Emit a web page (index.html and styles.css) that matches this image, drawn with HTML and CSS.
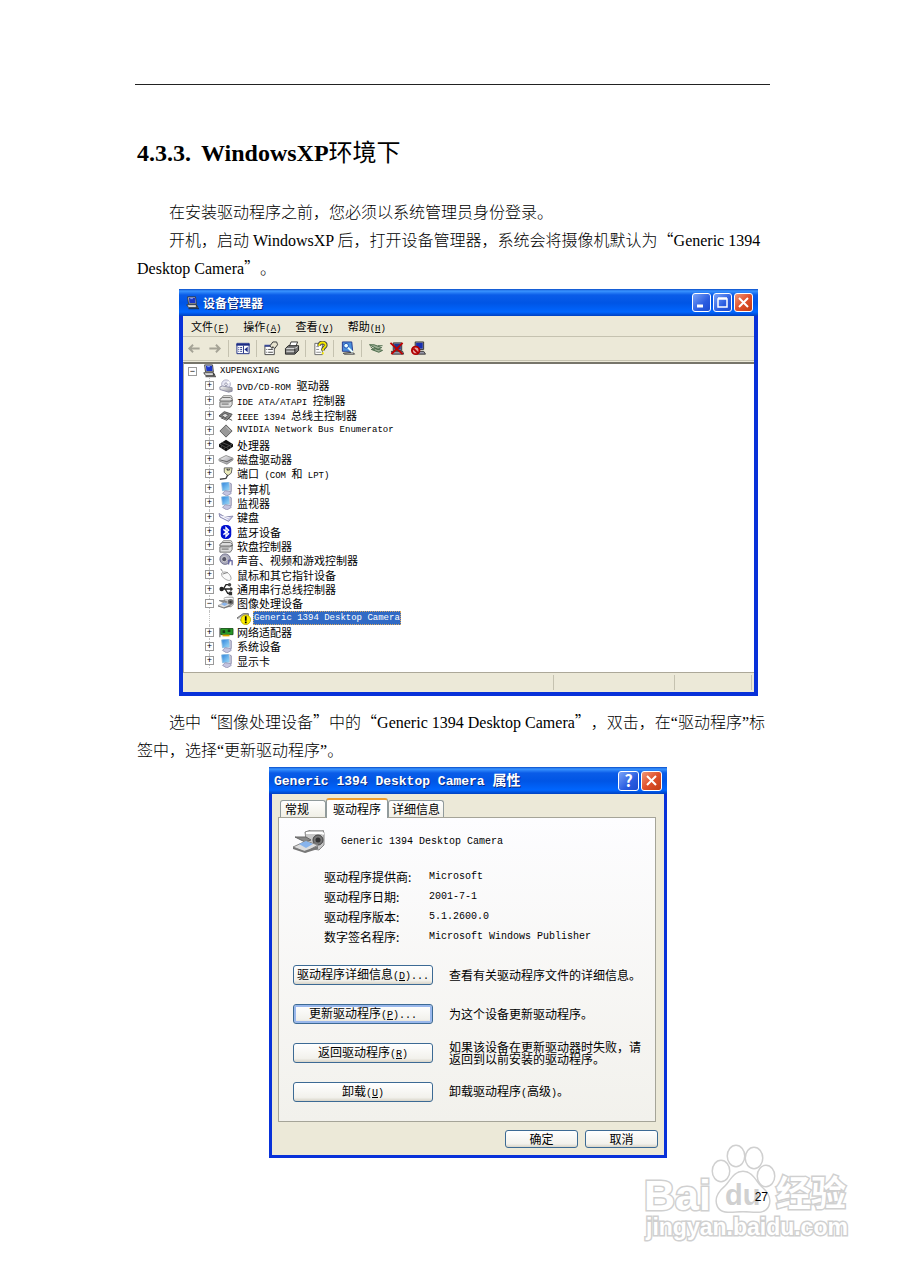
FILE: index.html
```html
<!DOCTYPE html>
<html lang="zh-CN">
<head>
	<meta charset="UTF-8">
	<title>4.3.3. WindowsXP环境下</title>
	<link rel="stylesheet" href="styles.css">
</head>
<body>
<svg class="defs" aria-hidden="true">
<defs>
<linearGradient id="screen" x1="0" y1="0" x2="1" y2="1"><stop offset="0" stop-color="#2a7fdc"/><stop offset="1" stop-color="#a8e4fa"/></linearGradient>
<linearGradient id="metal" x1="0" y1="0" x2="1" y2="1"><stop offset="0" stop-color="#fff"/><stop offset="1" stop-color="#8a8a92"/></linearGradient>
</defs>
<symbol id="i-pc" viewBox="0 0 16 16"><path d="M3 1h9l1 8H4z" fill="#d8d8d4" stroke="#333"/><path d="M4.500 2h7l.5 6H5z" fill="#1a35c8"/><path d="M6 3h3" stroke="#9ab8ff"/><path d="M2 10h11l2 3H4z" fill="#eee" stroke="#333"/><path d="M4 14.500h12M13 10v3" stroke="#222"/></symbol>
<symbol id="i-cd" viewBox="0 0 16 16"><circle cx="8" cy="6" r="5" fill="#e6e6f4" stroke="#aaaac0"/><path d="M8 6l4-3M8 6L5 10" stroke="#fff" stroke-width="2"/><circle cx="8" cy="6" r="1.500" fill="#fff" stroke="#9090a8"/><path d="M1 9l3-1 11 2v4l-4 1-10-3z" fill="url(#metal)" stroke="#8888a0"/></symbol>
<symbol id="i-drive" viewBox="0 0 16 16"><path d="M2 6l3-4h9l1 2v4" fill="#f4f4f0" stroke="#777"/><path d="M1 6l3-2h9l2 2v2H1zM1 9h11l3-2v5l-2 3H1z" fill="#ddd" stroke="#666"/><path d="M3 11.500h8" stroke="#555"/></symbol>
<symbol id="i-1394" viewBox="0 0 16 16"><path d="M0 8l6-5 9 3-5 6z" fill="#8a8a8a" stroke="#444"/><path d="M3 7l4-2 4 2-4 3z" fill="#ddd" stroke="#555"/><path d="M2 10l7 3 5-5M11 11l4 2" stroke="#444" fill="none"/></symbol>
<symbol id="i-diamond" viewBox="0 0 16 16"><path d="M8 1l7 7-7 7-7-7z" fill="#999" stroke="#555"/><path d="M8 3l5 5" stroke="#ccc"/></symbol>
<symbol id="i-cpu" viewBox="0 0 16 16"><path d="M0 7l8-5 8 5v3l-8 5-8-5z" fill="#111"/><path d="M1 7l7 4 7-4M3 5l10 4M3 11V9m3 4v-2m4 2v-2m3 0V9" stroke="#555" fill="none"/></symbol>
<symbol id="i-disk" viewBox="0 0 16 16"><path d="M0 8l8-4 8 3v2l-7 5-9-4z" fill="url(#metal)" stroke="#888"/><path d="M1 9l8 2 6-3" stroke="#555" fill="none"/></symbol>
<symbol id="i-port" viewBox="0 0 16 16"><path d="M6 1l9 0-1 6-4 3-4-4z" fill="#e8e8b8" stroke="#555"/><path d="M9 2l1 2m2-2l-1 2M10 9l-2 4-7 1" stroke="#444" stroke-width="1.500" fill="none"/></symbol>
<symbol id="i-computer" viewBox="0 0 16 16"><path d="M3 1l8-1 2 9-9 1z" fill="url(#screen)" stroke="#8abbe0"/><path d="M12 1l2 1v9l-2 1" stroke="#8888a8" fill="#ccccdc"/><path d="M4 13l3-3 6 1 1 2-5 3z" fill="#c4c4e0" stroke="#9898b8"/></symbol>
<symbol id="i-key" viewBox="0 0 16 16"><path d="M0 4l7 4 9-1-5 6-10-5z" fill="#c8c8e8" stroke="#8080a8"/><path d="M2 7l8 4M4 7l8 2" stroke="#fff"/></symbol>
<symbol id="i-bt" viewBox="0 0 16 16"><rect x="2" y="0" width="12" height="16" rx="5" fill="#0010d0"/><path d="M5 5l6 5-3 3V3l3 3-6 5" stroke="#fff" stroke-width="1.500" fill="none"/></symbol>
<symbol id="i-sound" viewBox="0 0 16 16"><circle cx="7" cy="7" r="6" fill="#aaaabd" stroke="#666680"/><circle cx="6" cy="7" r="3" fill="#555568" stroke="#ddd"/><path d="M11 8v5M11 8l4 1v5" stroke="#6666a0" stroke-width="1.500" fill="none"/></symbol>
<symbol id="i-mouse" viewBox="0 0 16 16"><path d="M3 6c3-3 8-1 10 3s0 6-3 5-8-4-7-8z" fill="#fafafa" stroke="#999"/><path d="M4 7l6-2M4 4L2 1" stroke="#777"/></symbol>
<symbol id="i-usb" viewBox="0 0 16 16"><path d="M2 8h12M5 8l3-5h3M7 8l3 5h2" stroke="#222" stroke-width="1.500" fill="none"/><circle cx="3" cy="8" r="2.500" fill="#222"/><circle cx="12" cy="3" r="2" fill="#444"/><path d="M11 11h4v4h-4zM13 5l3 3-3 3z" fill="#333"/></symbol>
<symbol id="i-camera" viewBox="0 0 32 24"><path d="M12 2l6-2h12l1 3v12l-5 5-12-2z" fill="#c8c8c8" stroke="#888"/><path d="M13 3h16l2 1" stroke="#fff" stroke-width="2" fill="none"/><circle cx="25" cy="10" r="5" fill="#777" stroke="#444"/><circle cx="25" cy="10" r="2.500" fill="#333"/><path d="M2 7l11 0 5 3-6 2z" fill="#888" stroke="#666"/><path d="M0 17l13-6 12 4-12 7z" fill="#ddd" stroke="#888"/><path d="M6 14l7-3 7 3-7 4z" fill="#88b4ec"/><path d="M0 17l11 4 14-5v3l-13 4-12-4z" fill="#777"/></symbol>
<symbol id="i-warn" viewBox="0 0 16 16"><path d="M0 8l7-5h6v5l-6 4z" fill="#aaa" stroke="#666"/><path d="M1 10l6-3" stroke="#eee" stroke-width="2"/><circle cx="10" cy="10" r="5.500" fill="#fff000" stroke="#b8a800"/><path d="M10 6v5M10 12v2" stroke="#000" stroke-width="2"/></symbol>
<symbol id="i-net" viewBox="0 0 16 16"><path d="M1 3v11" stroke="#777" stroke-width="1.500"/><path d="M2 4h14v7H2z" fill="#279827" stroke="#174f17"/><path d="M4 6h3v3H4zM10 5h3v3h-3z" fill="#153a15"/><path d="M4 12h8" stroke="#d8a800" stroke-width="2"/></symbol>
</svg>

<div class="page">
<hr class="rule">
<h2><span class="num">4.3.3.</span>WindowsXP<span class="zh">环境下</span></h2>
<div class="text">
<p>在安装驱动程序之前，您必须以系统管理员身份登录。</p>
<p>开机，启动 WindowsXP 后，打开设备管理器，系统会将摄像机默认为<span class="zh">“</span>Generic 1394 Desktop Camera<span class="zh">”</span>。</p>
</div>

<div class="win manager">
<div class="title">
<svg class="ic"><use href="#i-pc"/></svg>
<span class="name">设备管理器</span>
<button class="ctl" aria-label="最小化"><svg viewBox="0 0 17 17"><path d="M4 12h6" stroke="#fff" stroke-width="3"/></svg></button>
<button class="ctl" aria-label="最大化"><svg viewBox="0 0 17 17"><path d="M4 5h9v8H4zM4 4h9" stroke="#fff" stroke-width="1.500" fill="none"/></svg></button>
<button class="ctl close" aria-label="关闭"><svg viewBox="0 0 17 17"><path d="M4 4l9 9M13 4l-9 9" stroke="#fff" stroke-width="2"/></svg></button>
</div>
<div class="menu">
<button>文件<span class="en">(<u>F</u>)</span></button>
<button>操作<span class="en">(<u>A</u>)</span></button>
<button>查看<span class="en">(<u>V</u>)</span></button>
<button>帮助<span class="en">(<u>H</u>)</span></button>
</div>
<div class="tools">
<button aria-label="后退"><svg viewBox="0 0 16 16"><path d="M7 4L3 8l4 4M3 8h11" stroke="#a5a396" stroke-width="2" fill="none"/></svg></button>
<button aria-label="前进"><svg viewBox="0 0 16 16"><path d="M9 4l4 4-4 4M13 8H2" stroke="#a5a396" stroke-width="2" fill="none"/></svg></button>
<i class="sep"></i>
<button aria-label="显示树"><svg viewBox="0 0 16 16"><path d="M1.500 2.500h13v11h-13z" fill="#fff" stroke="#1c2c84"/><path d="M1 4h14" stroke="#1c2c84" stroke-width="2"/><path d="M8.500 5v8M3 7h1m1 0h2M3 9h1m1 0h2M3 11h1m1 0h2" stroke="#1c2c84"/><path d="M13 6v6L9.500 9z" fill="#1c2c84"/></svg></button>
<i class="sep"></i>
<button aria-label="属性"><svg viewBox="0 0 16 16"><path d="M1.500 5.500h10v9h-10z" fill="#fff" stroke="#444"/><path d="M1 5h8" stroke="#3a4a9a" stroke-width="2"/><path d="M3 9h1m1 0h5M3 12h1m1 0h5" stroke="#444"/><path d="M7 5l3-4h4l1 3-3 4-2-2-1 2z" fill="#e8e4d0" stroke="#333"/></svg></button>
<button aria-label="打印"><svg viewBox="0 0 16 16"><path d="M5 6l2-5h7l-2 5" fill="#fff" stroke="#333"/><path d="M1 8l3-3h11v5l-4 4H1z" fill="#777" stroke="#222"/><path d="M2 8h9l3-2M2 11h9" stroke="#ddd" fill="none"/><path d="M11 8v5" stroke="#222"/></svg></button>
<i class="sep"></i>
<button aria-label="帮助"><svg viewBox="0 0 16 16"><path d="M2.500 2.500h8v12h-8z" fill="#fff" stroke="#666"/><path d="M4 6h3M4 9h3M4 12h5" stroke="#888"/><path d="M7 5c0-5 8-4 7 0-.5 2-3 2-3 5" stroke="#444" stroke-width="4" fill="none"/><path d="M7 5c0-5 8-4 7 0-.5 2-3 2-3 5M11 12v2" stroke="#f4e800" stroke-width="2" fill="none"/></svg></button>
<i class="sep"></i>
<button aria-label="扫描硬件改动"><svg viewBox="0 0 16 16"><path d="M2 1h10l1 10H2z" fill="#4a8fdc" stroke="#223a90"/><path d="M3 13l10-1 2 2H4z" fill="#ddd" stroke="#333"/><circle cx="6" cy="5" r="2.500" fill="#e8ffff" stroke="#1a4ab0"/><path d="M8 7l5 5" stroke="#e8ffff" stroke-width="2"/></svg></button>
<i class="sep"></i>
<button aria-label="更新驱动程序"><svg viewBox="0 0 16 16"><path d="M1 4l5 0 8 3-4 2zM3 9l4-1 8 2-4 2z" fill="#9cae94" stroke="#4a6a4a"/><path d="M10 5h5M2 6l5 4" stroke="#4a6a4a"/></svg></button>
<button aria-label="卸载"><svg viewBox="0 0 16 16"><path d="M4 2h9v8H4zM2 11h12l1 3H3z" fill="#99a" stroke="#333"/><path d="M5 3h7v6H5z" fill="#223a90"/><path d="M1 2l13 12M14 2L2 14" stroke="#c00000" stroke-width="2"/></svg></button>
<button aria-label="停用"><svg viewBox="0 0 16 16"><path d="M5 1h9v8H5zM4 11h10l2 3H6z" fill="#99a" stroke="#333"/><path d="M6 2h7v6H6z" fill="#1830b0"/><circle cx="5.500" cy="10" r="4" fill="#e8a0a0" stroke="#b00000" stroke-width="2"/><path d="M3 8l5 5" stroke="#b00000" stroke-width="2"/></svg></button>
</div>
<ul class="tree">
<li class="root"><button class="tg" aria-label="折叠">−</button><svg class="ic"><use href="#i-pc"/></svg><span class="en">XUPENGXIANG</span></li>
<li><button class="tg" aria-label="展开">+</button><svg class="ic"><use href="#i-cd"/></svg><span><span class="en">DVD/CD-ROM </span>驱动器</span></li>
<li><button class="tg" aria-label="展开">+</button><svg class="ic"><use href="#i-drive"/></svg><span><span class="en">IDE ATA/ATAPI </span>控制器</span></li>
<li><button class="tg" aria-label="展开">+</button><svg class="ic"><use href="#i-1394"/></svg><span><span class="en">IEEE 1394 </span>总线主控制器</span></li>
<li><button class="tg" aria-label="展开">+</button><svg class="ic"><use href="#i-diamond"/></svg><span class="en">NVIDIA Network Bus Enumerator</span></li>
<li><button class="tg" aria-label="展开">+</button><svg class="ic"><use href="#i-cpu"/></svg><span>处理器</span></li>
<li><button class="tg" aria-label="展开">+</button><svg class="ic"><use href="#i-disk"/></svg><span>磁盘驱动器</span></li>
<li><button class="tg" aria-label="展开">+</button><svg class="ic"><use href="#i-port"/></svg><span>端口<span class="en"> (COM </span>和<span class="en"> LPT)</span></span></li>
<li><button class="tg" aria-label="展开">+</button><svg class="ic"><use href="#i-computer"/></svg><span>计算机</span></li>
<li><button class="tg" aria-label="展开">+</button><svg class="ic"><use href="#i-computer"/></svg><span>监视器</span></li>
<li><button class="tg" aria-label="展开">+</button><svg class="ic"><use href="#i-key"/></svg><span>键盘</span></li>
<li><button class="tg" aria-label="展开">+</button><svg class="ic"><use href="#i-bt"/></svg><span>蓝牙设备</span></li>
<li><button class="tg" aria-label="展开">+</button><svg class="ic"><use href="#i-drive"/></svg><span>软盘控制器</span></li>
<li><button class="tg" aria-label="展开">+</button><svg class="ic"><use href="#i-sound"/></svg><span>声音、视频和游戏控制器</span></li>
<li><button class="tg" aria-label="展开">+</button><svg class="ic"><use href="#i-mouse"/></svg><span>鼠标和其它指针设备</span></li>
<li><button class="tg" aria-label="展开">+</button><svg class="ic"><use href="#i-usb"/></svg><span>通用串行总线控制器</span></li>
<li><button class="tg" aria-label="折叠">−</button><svg class="ic"><use href="#i-camera"/></svg><span>图像处理设备</span></li>
<li class="child"><svg class="ic"><use href="#i-warn"/></svg><span class="en sel">Generic 1394 Desktop Camera</span></li>
<li><button class="tg" aria-label="展开">+</button><svg class="ic"><use href="#i-net"/></svg><span>网络适配器</span></li>
<li><button class="tg" aria-label="展开">+</button><svg class="ic"><use href="#i-computer"/></svg><span>系统设备</span></li>
<li><button class="tg" aria-label="展开">+</button><svg class="ic"><use href="#i-computer"/></svg><span>显示卡</span></li>
</ul>
<div class="status"><span></span><span></span><span></span></div>
</div>

<div class="text after">
<p>选中<span class="zh">“</span>图像处理设备<span class="zh">”</span>中的<span class="zh">“</span>Generic 1394 Desktop Camera<span class="zh">”</span>，双击，在“驱动程序”标签中，选择“更新驱动程序”。</p>
</div>

<div class="win dialog">
<div class="title">
<span class="name"><span class="en">Generic 1394 Desktop Camera </span>属性</span>
<button class="ctl help" aria-label="帮助">?</button>
<button class="ctl close" aria-label="关闭"><svg viewBox="0 0 17 17"><path d="M4 4l9 9M13 4l-9 9" stroke="#fff" stroke-width="2"/></svg></button>
</div>
<div class="tabs">
<button>常规</button>
<button class="on">驱动程序</button>
<button>详细信息</button>
</div>
<div class="panel">
<div class="device"><svg><use href="#i-camera"/></svg><span class="en">Generic 1394 Desktop Camera</span></div>
<dl>
<dt>驱动程序提供商:</dt><dd>Microsoft</dd>
<dt>驱动程序日期:</dt><dd>2001-7-1</dd>
<dt>驱动程序版本:</dt><dd>5.1.2600.0</dd>
<dt>数字签名程序:</dt><dd>Microsoft Windows Publisher</dd>
</dl>
<div class="acts">
<button class="btn">驱动程序详细信息<span class="en">(<u>D</u>)...</span></button><p>查看有关驱动程序文件的详细信息。</p>
<button class="btn focus">更新驱动程序<span class="en">(<u>P</u>)...</span></button><p>为这个设备更新驱动程序。</p>
<button class="btn">返回驱动程序<span class="en">(<u>R</u>)</span></button><p>如果该设备在更新驱动器时失败，请返回到以前安装的驱动程序。</p>
<button class="btn">卸载<span class="en">(<u>U</u>)</span></button><p>卸载驱动程序<span class="en">(</span>高级<span class="en">)</span>。</p>
</div>
</div>
<div class="foot">
<button class="btn">确定</button>
<button class="btn">取消</button>
</div>
</div>
<div class="pageno">27</div>

<svg class="mark" viewBox="0 0 216 106" role="img" aria-label="Baidu经验">
<g class="ink">
<text x="4" y="70" font-size="43" class="b">Bai</text>
<ellipse cx="81" cy="31" rx="8" ry="10"/><ellipse cx="96" cy="16" rx="8" ry="10"/><ellipse cx="114" cy="18" rx="8" ry="10"/><ellipse cx="126" cy="36" rx="8" ry="10"/>
<path d="M103 32c-9 0-12 9-18 15-7 6-10 12-7 19 4 8 14 5 25 5s21 3 25-5c3-7 0-13-7-19-6-6-9-15-18-15z"/>
<text x="136" y="66" font-size="35" class="c">经验</text>
<text x="6" y="95" font-size="23" class="b">jingyan.baidu.com</text>
</g>
<text x="85" y="65" font-size="29" class="b du">du</text>
</svg>
</div>
</body>
</html>
```

FILE: styles.css
```css
*{
	padding: 0;
	margin: 0;
	box-sizing: border-box;
	list-style: none;
}
body{
	background-color: #fff;
	color: #000;
	font-family: "Liberation Serif","Noto Sans CJK SC",serif;
	text-spacing-trim: space-all;
}
button{
	font: inherit;
	color: inherit;
	background: none;
	border: 0;
}
.defs{
	position: absolute;
	width: 0;
	height: 0;
}
.page{
	position: relative;
	padding: 84px 135px 76px;
}
.rule{
	border: 0;
	border-top: 1px solid #222;
}
h2{
	margin: 54px 2px 32px;
	font-size: 24px;
	line-height: 28px;
}
h2 .num{
	margin-right: 10px;
}
.zh{
	font-family: "Noto Sans CJK SC",sans-serif;
	font-weight: 300;
	line-height: 1;
}
h2 .zh{
	font-weight: 400;
}
.text{
	padding: 0 2px;
	font-size: 16px;
	font-weight: 300;
	line-height: 28px;
}
.text p{
	text-indent: 32px;
}
.after{
	padding-right: 0;
	margin-top: 13px;
}

/* xp window */
.win{
	border: 4px solid #0831d9;
	border-top: 0;
	background-color: #ece9d8;
	font-family: "Noto Sans CJK SC",sans-serif;
	font-size: 11px;
	line-height: 14px;
}
.en{
	font-family: "Liberation Mono",monospace;
	font-size: 9px;
	line-height: 1;
	white-space: pre;
}
.manager{
	margin: 6px 12px 0 44px;
}
.title{
	display: flex;
	align-items: center;
	gap: 2px;
	height: 27px;
	margin: 0 -4px;
	padding: 0 5px;
	background: linear-gradient(#0a4cc8,#3a94ff 2px,#0a5ce8 6px,#0055e5 14px,#0066ff 23px,#0040c0);
	color: #fff;
	font-size: 12px;
	font-weight: bold;
}
.title .name{
	flex: 1;
	text-shadow: 1px 1px #0a2a80;
}
.ic{
	width: 16px;
	height: 14px;
	flex: none;
}
.manager .name{
	padding-left: 1px;
}
.ctl{
	width: 19px;
	height: 19px;
	border: 1px solid #fff;
	border-radius: 3px;
	background: linear-gradient(135deg,#7aa4f8,#2a5ce0 60%,#1c4cd0);
}
.ctl svg{
	display: block;
	width: 17px;
	height: 17px;
}
.close{
	background: linear-gradient(135deg,#f09878,#e0502c 50%,#c03c14);
}
.help{
	font-size: 16px;
	line-height: 17px;
}
.menu{
	display: flex;
	gap: 14px;
	height: 21px;
	padding-left: 8px;
	border-bottom: 1px solid #c5c2b0;
}
.tools{
	display: flex;
	align-items: center;
	height: 24px;
	border-bottom: 1px solid #c5c2b0;
}
.tools button{
	width: 21px;
	height: 20px;
}
.tools svg{
	display: block;
	width: 16px;
	height: 15px;
	margin: auto;
}
.sep{
	width: 1px;
	height: 17px;
	margin: 0 3px;
	background-color: #c5c2b0;
}
.tree{
	display: grid;
	grid-auto-rows: 1fr;
	height: 310px;
	margin-top: 1px;
	padding-bottom: 4px;
	border-top: 2px solid #77756a;
	border-left: 1px solid #aca899;
	background-color: #fff;
}
.tree li{
	position: relative;
	display: flex;
	align-items: center;
	gap: 3px;
	padding-left: 21px;
}
/* dotted branch line behind the toggles */
.tree li::before{
	content: "";
	position: absolute;
	left: 25px;
	top: 0;
	bottom: 0;
	width: 9px;
	border-left: 1px dotted #c0c0c0;
}
.tree li.root{
	padding-left: 4px;
}
.tree li.root::before{
	display: none;
}
.tree li.child{
	padding-left: 52px;
	gap: 1px;
}
.tg{
	position: relative;
	width: 9px;
	height: 9px;
	margin-right: 1px;
	border: 1px solid #9a9a9a;
	background-color: #fff;
	font-family: "Liberation Sans",sans-serif;
	font-size: 9px;
	line-height: 7px;
}
.sel{
	border: 1px dotted #d8a860;
	background-color: #316ac5;
	color: #fff;
	line-height: 12px;
}
.status{
	display: flex;
	height: 20px;
	padding: 2px 2px 2px 0;
	border-top: 1px solid #aca899;
}
.status span{
	width: 121px;
	border-right: 1px solid #c5c2b0;
}
.status span:first-child{
	flex: 1;
}
.status span:last-child{
	width: 77px;
}

/* properties dialog */
.dialog{
	margin: 2px 103px 0 134px;
	border-width: 0 3px 3px;
	font-size: 12px;
	line-height: 12px;
}
.dialog .en,.dialog dd{
	font-size: 10px;
}
.dialog .title{
	margin: 0 -3px;
	font-size: 14px;
}
.dialog .title .en{
	font-size: 13px;
}
.dialog .ctl{
	width: 21px;
	height: 20px;
}
.dialog .ctl svg{
	margin: auto;
}
.tabs{
	display: flex;
	align-items: flex-end;
	padding: 4px 8px 0;
}
.tabs button{
	height: 17px;
	padding: 0 3px;
	border: 1px solid #919b9c;
	border-bottom: 0;
	border-radius: 3px 3px 0 0;
	background: linear-gradient(#fff,#f0efe6);
}
.tabs button:first-child{
	padding: 0 16px 0 4px;
}
.tabs .on{
	height: 20px;
	margin-bottom: -1px;
	padding: 0 6px 1px;
	border-top: 2px solid #f0a030;
	background: #fff;
}
.panel{
	margin: 0 8px 0 6px;
	padding: 12px 12px 17px 14px;
	border: 1px solid #a5a498;
	background: linear-gradient(#fdfdff,#f2f1ec);
}
.device{
	display: flex;
	align-items: center;
	gap: 16px;
}
.device svg{
	width: 32px;
	height: 24px;
}
dl{
	display: grid;
	grid-template-columns: 105px 1fr;
	margin: 13px 0 16px 31px;
	line-height: 20px;
}
dd{
	font-family: "Liberation Mono",monospace;
}
.acts{
	display: grid;
	grid-template-columns: 140px 1fr;
	grid-auto-rows: 24px;
	gap: 15px 16px;
	align-items: center;
}
.btn{
	height: 20px;
	border: 1px solid #3c6a94;
	border-radius: 3px;
	background: linear-gradient(#fff,#f2f1ec 80%,#d8d4c8);
	white-space: nowrap;
}
.focus{
	box-shadow: inset 0 0 0 2px #9ab8ec;
}
.foot{
	display: flex;
	justify-content: flex-end;
	gap: 7px;
	padding: 8px 6px 7px;
}
.foot .btn{
	width: 73px;
	height: 18px;
}
.pageno{
	position: relative;
	z-index: 1;
	margin: 32px 2px 0;
	font-family: "Liberation Sans",sans-serif;
	font-size: 12px;
	line-height: 14px;
	text-align: right;
}

/* watermark lies over the page corner */
.mark{
	position: absolute;
	right: 49px;
	bottom: 34px;
	width: 216px;
	height: 106px;
}
.ink{
	fill: #fff;
	stroke: #d0d0d0;
	stroke-width: 3px;
	paint-order: stroke;
}
.b{
	font-family: "Liberation Sans",sans-serif;
	font-weight: bold;
}
.c{
	font-family: "Noto Sans CJK SC",sans-serif;
	font-weight: bold;
}
.du{
	fill: #d0d0d0;
}
```
